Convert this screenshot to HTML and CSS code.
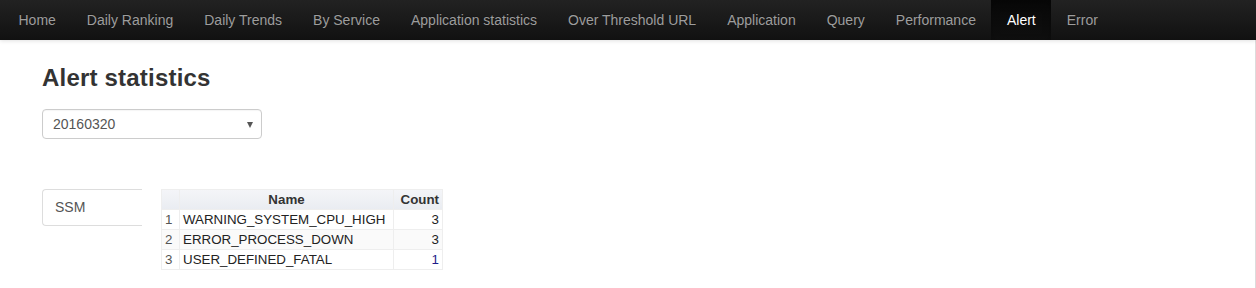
FILE: index.html
```html
<!DOCTYPE html>
<html>
<head>
<meta charset="utf-8">
<link rel="stylesheet" href="styles.css">
</head>
<body>
<nav class="navbar">
  <ul class="nav">
    <li><a>Home</a></li>
    <li><a>Daily Ranking</a></li>
    <li><a>Daily Trends</a></li>
    <li><a>By Service</a></li>
    <li><a>Application statistics</a></li>
    <li><a>Over Threshold URL</a></li>
    <li><a>Application</a></li>
    <li><a>Query</a></li>
    <li><a>Performance</a></li>
    <li class="active"><a>Alert</a></li>
    <li><a>Error</a></li>
  </ul>
</nav>
<main class="page">
  <h3 class="title">Alert statistics</h3>
  <div class="select">
    <span>20160320</span>
    <span class="caret"></span>
  </div>
  <div class="panel">
    <div class="side">SSM</div>
    <table class="gtable">
      <colgroup><col class="c-seq"><col class="c-name"><col class="c-count"></colgroup>
      <thead>
        <tr><th></th><th>Name</th><th>Count</th></tr>
      </thead>
      <tbody>
        <tr><td class="seq">1</td><td>WARNING_SYSTEM_CPU_HIGH</td><td class="num">3</td></tr>
        <tr class="odd"><td class="seq">2</td><td>ERROR_PROCESS_DOWN</td><td class="num">3</td></tr>
        <tr><td class="seq">3</td><td>USER_DEFINED_FATAL</td><td class="num blue">1</td></tr>
      </tbody>
    </table>
  </div>
</main>
</body>
</html>
```

FILE: styles.css
```css
html, body {
  margin: 0;
  padding: 0;
  background: #fff;
}
body {
  font-family: "Liberation Sans", Arial, Helvetica, sans-serif;
  font-size: 14px;
  color: #333;
  height: 288px;
  overflow: hidden;
}
.navbar {
  height: 40px;
  background: linear-gradient(to bottom, #222222 0, #111111 100%);
  box-shadow: 0 1px 4px rgba(0,0,0,0.12);
  position: relative;
  z-index: 2;
}
.nav {
  list-style: none;
  margin: 0;
  padding: 0 0 0 3px;
  display: flex;
  height: 40px;
}
.nav li a {
  display: block;
  padding: 10px 15.5px;
  line-height: 20px;
  color: #9d9d9d;
  text-shadow: 0 -1px 0 rgba(0,0,0,0.25);
}
.nav li.active a {
  color: #fff;
  background: linear-gradient(to bottom, #080808 0, #0f0f0f 100%);
  box-shadow: inset 0 3px 9px rgba(0,0,0,0.25);
}
.page {
  height: 248px;
  border-right: 1px solid #dcdcdc;
  padding: 25px 0 0 42px;
  box-sizing: border-box;
}
.title {
  margin: 0;
  font-size: 24px;
  font-weight: bold;
  line-height: 26px;
  letter-spacing: 0.2px;
  color: #333;
}
.select {
  margin-top: 18px;
  width: 220px;
  height: 30px;
  box-sizing: border-box;
  border: 1px solid #ccc;
  border-radius: 4px;
  padding: 0 10px;
  display: flex;
  align-items: center;
  justify-content: space-between;
  color: #555;
  font-size: 14px;
  box-shadow: inset 0 1px 1px rgba(0,0,0,0.04);
}
.caret {
  width: 0;
  height: 0;
  border-left: 3.5px solid transparent;
  border-right: 3.5px solid transparent;
  border-top: 6px solid #555;
  margin-right: -2px;
  margin-top: 2px;
}
.panel {
  margin-top: 50px;
  display: flex;
  align-items: flex-start;
  gap: 19px;
}
.side {
  width: 100px;
  height: 37px;
  box-sizing: border-box;
  border: 1px solid #ddd;
  border-right: none;
  border-radius: 4px 0 0 4px;
  padding: 0 12px;
  line-height: 35px;
  color: #555;
  font-size: 14px;
}
.gtable {
  border-collapse: collapse;
  table-layout: fixed;
  width: 281px;
  font-family: "Liberation Sans", Arial, sans-serif;
  font-size: 13.33px;
  border: 1px solid #e6e6e6;
}
.c-seq { width: 18px; }
.c-name { width: 214px; }
.c-count { width: 49px; }
.gtable th,
.gtable td {
  border: 1px solid #eeeeee;
  padding: 2px 3px;
  line-height: 15px;
  white-space: nowrap;
  color: #222;
}
.gtable thead tr {
  background: linear-gradient(to bottom, #f4f5f8 0, #e9ecf1 100%);
}
.gtable th {
  font-weight: bold;
  text-align: center;
  color: #333;
}
.gtable th:last-child {
  text-align: right;
}
.gtable tbody tr { background: #fff; }
.gtable tbody tr.odd { background: #fafafa; }
.gtable td.seq {
  text-align: right;
  padding-right: 7px;
  color: #555;
}
.gtable td.num {
  text-align: right;
}
.gtable td.blue {
  color: #1d1d8a;
}
```
